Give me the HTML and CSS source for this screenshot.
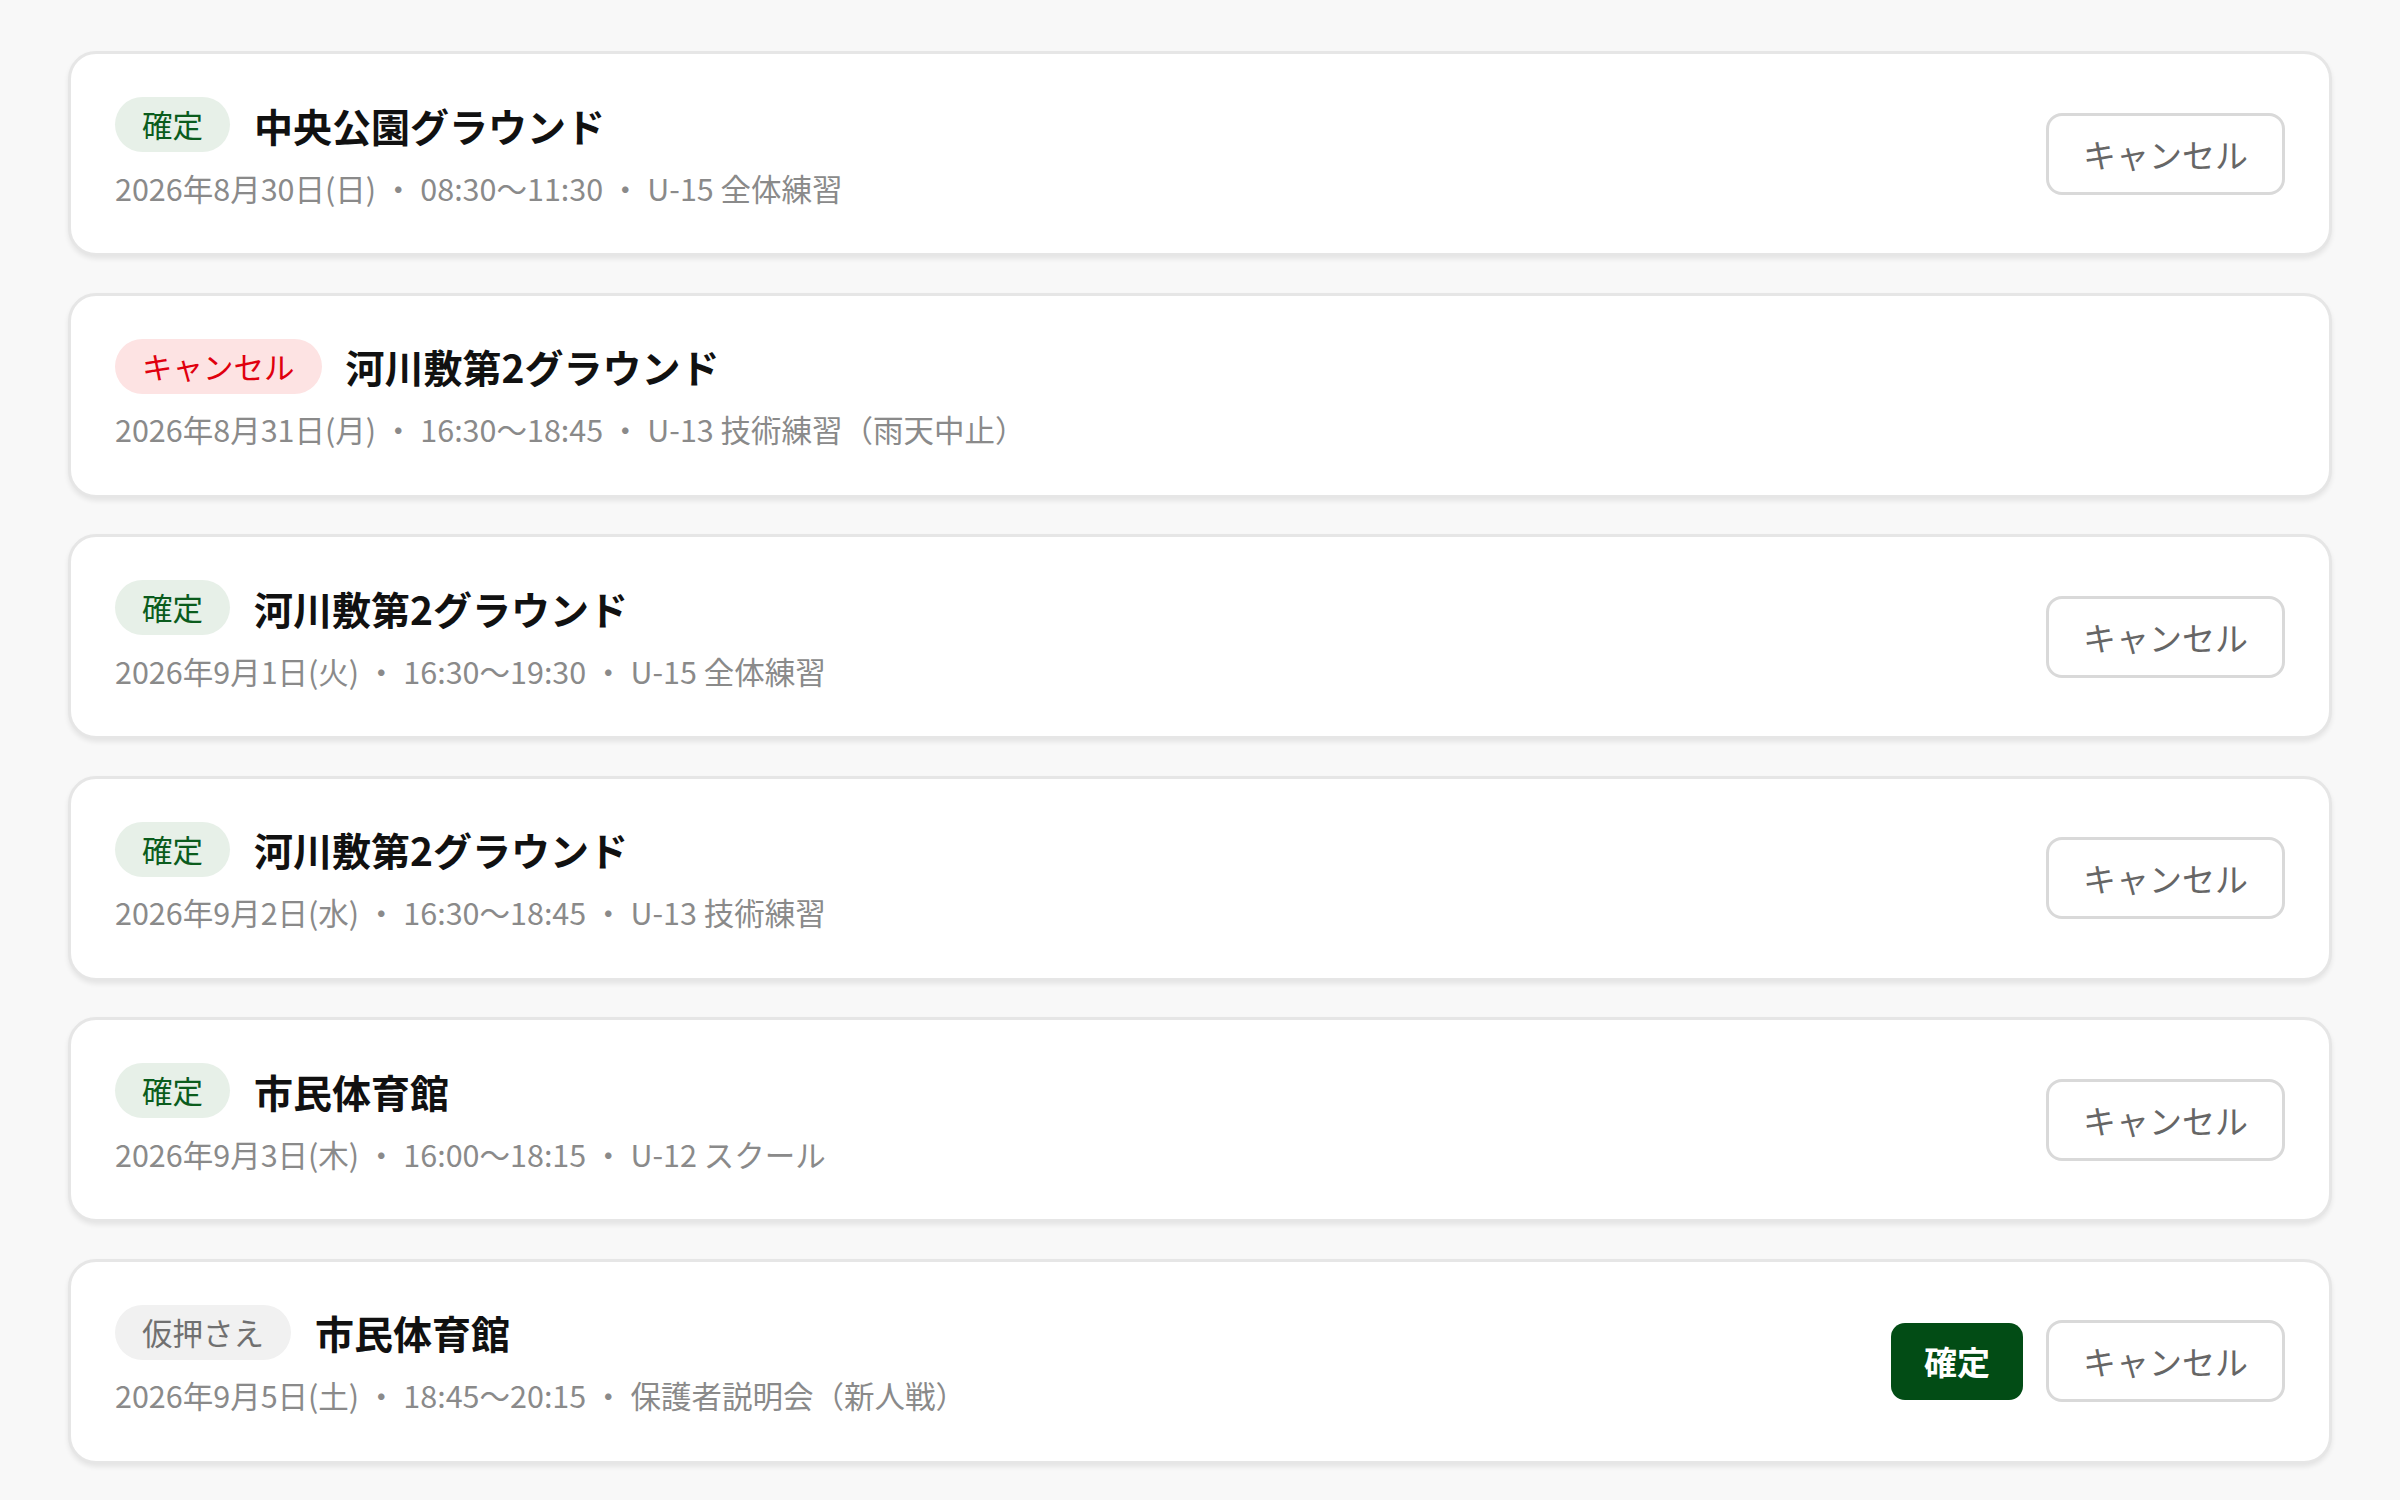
FILE: index.html
```html
<!DOCTYPE html>
<html lang="ja">
<head>
  <meta charset="UTF-8">
  <title>予約一覧</title>
  <link rel="stylesheet" href="styles.css">
</head>
<body>

  <div class="list">
    <div class="card">
      <div class="info">
        <div class="head">
          <span class="badge ok">確定</span>
          <span class="place">中央公園グラウンド</span>
        </div>
        <div class="meta">2026年8月30日(日) ・ 08:30〜11:30 ・ U-15 全体練習</div>
      </div>
      <div class="actions">
        <button class="btn cancel">キャンセル</button>
      </div>
    </div>

    <div class="card">
      <div class="info">
        <div class="head">
          <span class="badge ng">キャンセル</span>
          <span class="place">河川敷第2グラウンド</span>
        </div>
        <div class="meta">2026年8月31日(月) ・ 16:30〜18:45 ・ U-13 技術練習（雨天中止）</div>
      </div>
    </div>

    <div class="card">
      <div class="info">
        <div class="head">
          <span class="badge ok">確定</span>
          <span class="place">河川敷第2グラウンド</span>
        </div>
        <div class="meta">2026年9月1日(火) ・ 16:30〜19:30 ・ U-15 全体練習</div>
      </div>
      <div class="actions">
        <button class="btn cancel">キャンセル</button>
      </div>
    </div>

    <div class="card">
      <div class="info">
        <div class="head">
          <span class="badge ok">確定</span>
          <span class="place">河川敷第2グラウンド</span>
        </div>
        <div class="meta">2026年9月2日(水) ・ 16:30〜18:45 ・ U-13 技術練習</div>
      </div>
      <div class="actions">
        <button class="btn cancel">キャンセル</button>
      </div>
    </div>

    <div class="card">
      <div class="info">
        <div class="head">
          <span class="badge ok">確定</span>
          <span class="place">市民体育館</span>
        </div>
        <div class="meta">2026年9月3日(木) ・ 16:00〜18:15 ・ U-12 スクール</div>
      </div>
      <div class="actions">
        <button class="btn cancel">キャンセル</button>
      </div>
    </div>

    <div class="card">
      <div class="info">
        <div class="head">
          <span class="badge hold">仮押さえ</span>
          <span class="place">市民体育館</span>
        </div>
        <div class="meta">2026年9月5日(土) ・ 18:45〜20:15 ・ 保護者説明会（新人戦）</div>
      </div>
      <div class="actions">
        <button class="btn confirm">確定</button>
        <button class="btn cancel">キャンセル</button>
      </div>
    </div>
  </div>

</body>
</html>
```

FILE: styles.css
```css
* {
  margin: 0;
  padding: 0;
  box-sizing: border-box;
  font-family: "Noto Sans CJK JP", "Noto Sans", sans-serif;
}

body {
  background-color: #f8f8f8;
}

.list {
  display: flex;
  flex-direction: column;
  gap: 36.5px;
  padding: 51px 68px;
}

.card {
  display: flex;
  align-items: center;
  justify-content: space-between;
  background-color: #fff;
  border: 3px solid #e6e6e6;
  border-radius: 28px;
  box-shadow: 0 3px 5px rgba(0, 0, 0, 0.08);
  padding: 43px 44px;
  height: 205px;
}

.head {
  display: flex;
  align-items: center;
  gap: 24px;
}

.badge {
  height: 55px;
  line-height: 55px;
  padding: 0 27px;
  border-radius: 28px;
  font-size: 30.5px;
}

.badge.ok {
  background-color: #e7f0e8;
  color: #0b5c1d;
}

.badge.ng {
  background-color: #fde3e3;
  color: #e0000e;
}

.badge.hold {
  background-color: #f1f1f1;
  color: #707070;
}

.place {
  font-size: 39px;
  font-weight: 700;
  color: #111;
}

.meta {
  margin-top: 13px;
  font-size: 30.5px;
  line-height: 45px;
  color: #8a8a8a;
}

.actions {
  display: flex;
  align-items: center;
  gap: 23px;
}

.btn {
  font-size: 33px;
  cursor: pointer;
}

.cancel {
  height: 82px;
  padding: 0 34px;
  background-color: #fff;
  border: 3px solid #d9d9d9;
  border-radius: 16px;
  color: #666;
}

.confirm {
  height: 77px;
  padding: 0 33px;
  background-color: #024c15;
  border: none;
  border-radius: 14px;
  color: #fff;
  font-weight: 700;
}
```
